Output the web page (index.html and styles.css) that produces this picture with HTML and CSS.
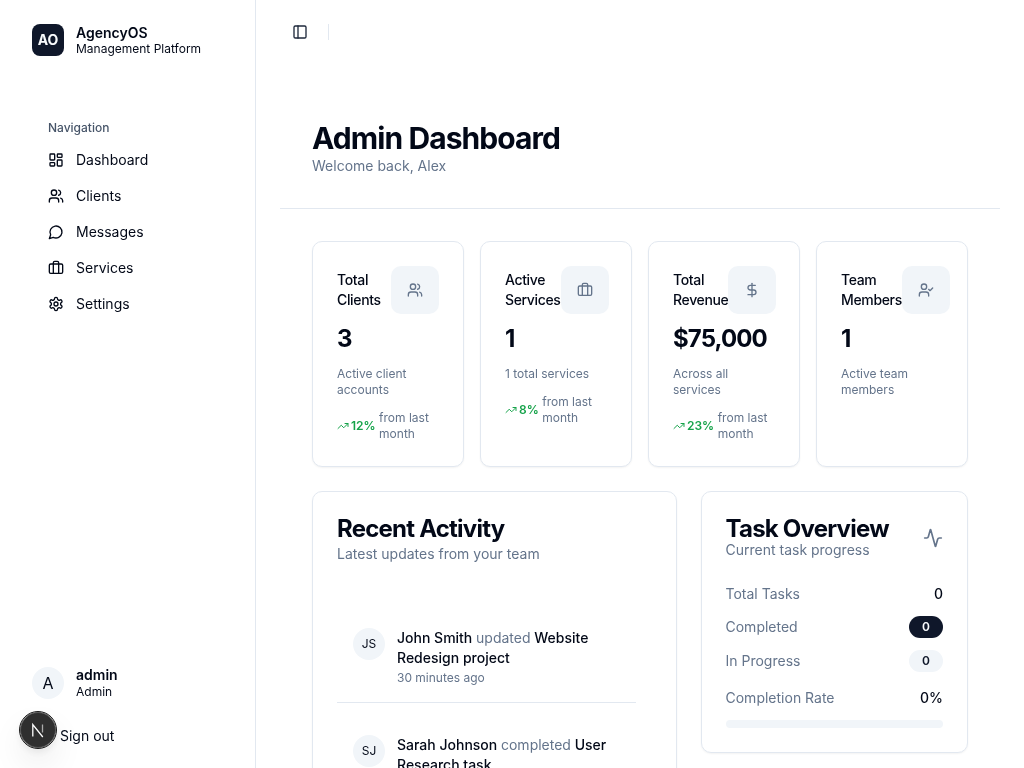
FILE: index.html
```html
<!DOCTYPE html>
<html lang="en">
<head>
<meta charset="utf-8">
<title>Admin Dashboard</title>
<link rel="stylesheet" href="styles.css">
</head>
<body>
<svg class="defs" aria-hidden="true">
  <symbol id="i-dash" viewBox="0 0 24 24"><rect x="3" y="3" width="7" height="9" rx="1"/><rect x="14" y="3" width="7" height="5" rx="1"/><rect x="14" y="12" width="7" height="9" rx="1"/><rect x="3" y="16" width="7" height="5" rx="1"/></symbol>
  <symbol id="i-users" viewBox="0 0 24 24"><path d="M16 21v-2a4 4 0 0 0-4-4H6a4 4 0 0 0-4 4v2"/><circle cx="9" cy="7" r="4"/><path d="M22 21v-2a4 4 0 0 0-3-3.87"/><path d="M16 3.13a4 4 0 0 1 0 7.75"/></symbol>
  <symbol id="i-msg" viewBox="0 0 24 24"><path d="M7.9 20A9 9 0 1 0 4 16.1L2 22Z"/></symbol>
  <symbol id="i-case" viewBox="0 0 24 24"><path d="M16 20V4a2 2 0 0 0-2-2h-4a2 2 0 0 0-2 2v16"/><rect x="2" y="6" width="20" height="14" rx="2"/></symbol>
  <symbol id="i-gear" viewBox="0 0 24 24"><path d="M12.22 2h-.44a2 2 0 0 0-2 2v.18a2 2 0 0 1-1 1.73l-.43.25a2 2 0 0 1-2 0l-.15-.08a2 2 0 0 0-2.73.73l-.22.38a2 2 0 0 0 .73 2.73l.15.1a2 2 0 0 1 1 1.72v.51a2 2 0 0 1-1 1.74l-.15.09a2 2 0 0 0-.73 2.73l.22.38a2 2 0 0 0 2.73.73l.15-.08a2 2 0 0 1 2 0l.43.25a2 2 0 0 1 1 1.73V20a2 2 0 0 0 2 2h.44a2 2 0 0 0 2-2v-.18a2 2 0 0 1 1-1.73l.43-.25a2 2 0 0 1 2 0l.15.08a2 2 0 0 0 2.73-.73l.22-.39a2 2 0 0 0-.73-2.73l-.15-.08a2 2 0 0 1-1-1.74v-.5a2 2 0 0 1 1-1.74l.15-.09a2 2 0 0 0 .73-2.73l-.22-.38a2 2 0 0 0-2.73-.73l-.15.08a2 2 0 0 1-2 0l-.43-.25a2 2 0 0 1-1-1.73V4a2 2 0 0 0-2-2z"/><circle cx="12" cy="12" r="3"/></symbol>
  <symbol id="i-dollar" viewBox="0 0 24 24"><line x1="12" y1="2" x2="12" y2="22"/><path d="M17 5H9.5a3.5 3.5 0 0 0 0 7h5a3.5 3.5 0 0 1 0 7H6"/></symbol>
  <symbol id="i-ucheck" viewBox="0 0 24 24"><path d="M16 21v-2a4 4 0 0 0-4-4H6a4 4 0 0 0-4 4v2"/><circle cx="9" cy="7" r="4"/><polyline points="16 11 18 13 22 9"/></symbol>
  <symbol id="i-activity" viewBox="0 0 24 24"><path d="M22 12h-2.48a2 2 0 0 0-1.93 1.46l-2.35 8.36a.25.25 0 0 1-.48 0L9.24 2.18a.25.25 0 0 0-.48 0l-2.35 8.36A2 2 0 0 1 4.49 12H2"/></symbol>
  <symbol id="i-trend" viewBox="0 0 24 24"><polyline points="22 7 13.5 15.5 8.5 10.5 2 17"/><polyline points="16 7 22 7 22 13"/></symbol>
  <symbol id="i-panel" viewBox="0 0 24 24"><rect x="3" y="3" width="18" height="18" rx="2"/><path d="M9 3v18"/></symbol>
  <symbol id="i-logout" viewBox="0 0 24 24"><path d="M9 21H5a2 2 0 0 1-2-2V5a2 2 0 0 1 2-2h4"/><polyline points="16 17 21 12 16 7"/><line x1="21" y1="12" x2="9" y2="12"/></symbol>
</svg>

<div class="app">
  <aside class="sidebar">
    <div class="brand">
      <div class="brand-mark">AO</div>
      <div class="brand-text">
        <div class="brand-name">AgencyOS</div>
        <div class="brand-sub">Management Platform</div>
      </div>
    </div>
    <nav class="nav">
      <div class="nav-label">Navigation</div>
      <a class="nav-item"><svg class="ico"><use href="#i-dash"/></svg>Dashboard</a>
      <a class="nav-item"><svg class="ico"><use href="#i-users"/></svg>Clients</a>
      <a class="nav-item"><svg class="ico"><use href="#i-msg"/></svg>Messages</a>
      <a class="nav-item"><svg class="ico"><use href="#i-case"/></svg>Services</a>
      <a class="nav-item"><svg class="ico"><use href="#i-gear"/></svg>Settings</a>
    </nav>
    <div class="side-foot">
      <div class="user">
        <div class="user-avatar">A</div>
        <div class="user-text">
          <div class="user-name">admin</div>
          <div class="user-role">Admin</div>
        </div>
      </div>
      <a class="signout"><svg class="ico"><use href="#i-logout"/></svg>Sign out</a>
    </div>
  </aside>

  <main class="main">
    <header class="topbar">
      <svg class="ico"><use href="#i-panel"/></svg>
      <span class="topbar-sep"></span>
    </header>
    <div class="content">
      <section class="page-head">
        <h1 class="page-title">Admin Dashboard</h1>
        <p class="page-sub">Welcome back, Alex</p>
      </section>
      <div class="body">
        <section class="stats">
          <article class="stat card">
            <div class="stat-top"><div class="stat-name">Total Clients</div><div class="stat-icon"><svg class="ico"><use href="#i-users"/></svg></div></div>
            <div class="stat-value">3</div>
            <div class="stat-desc">Active client accounts</div>
            <div class="trend"><svg class="trend-ico"><use href="#i-trend"/></svg><span class="trend-pct">12%</span><span class="trend-text">from last month</span></div>
          </article>
          <article class="stat card">
            <div class="stat-top"><div class="stat-name">Active Services</div><div class="stat-icon"><svg class="ico"><use href="#i-case"/></svg></div></div>
            <div class="stat-value">1</div>
            <div class="stat-desc">1 total services</div>
            <div class="trend"><svg class="trend-ico"><use href="#i-trend"/></svg><span class="trend-pct">8%</span><span class="trend-text">from last month</span></div>
          </article>
          <article class="stat card">
            <div class="stat-top"><div class="stat-name">Total Revenue</div><div class="stat-icon"><svg class="ico"><use href="#i-dollar"/></svg></div></div>
            <div class="stat-value">$75,000</div>
            <div class="stat-desc">Across all services</div>
            <div class="trend"><svg class="trend-ico"><use href="#i-trend"/></svg><span class="trend-pct">23%</span><span class="trend-text">from last month</span></div>
          </article>
          <article class="stat card">
            <div class="stat-top"><div class="stat-name">Team Members</div><div class="stat-icon"><svg class="ico"><use href="#i-ucheck"/></svg></div></div>
            <div class="stat-value">1</div>
            <div class="stat-desc">Active team members</div>
          </article>
        </section>

        <section class="panels">
          <article class="panel card">
            <h2 class="panel-title">Recent Activity</h2>
            <p class="panel-sub panel-sub-gap">Latest updates from your team</p>
            <div class="feed">
              <div class="feed-item">
                <div class="feed-avatar">JS</div>
                <div class="feed-body">
                  <div class="feed-line"><span>John Smith</span> <span class="feed-verb">updated</span> <span>Website Redesign project</span></div>
                  <div class="feed-time">30 minutes ago</div>
                </div>
              </div>
              <div class="feed-item">
                <div class="feed-avatar">SJ</div>
                <div class="feed-body">
                  <div class="feed-line"><span>Sarah Johnson</span> <span class="feed-verb">completed</span> <span>User Research task</span></div>
                  <div class="feed-time">2 hours ago</div>
                </div>
              </div>
            </div>
          </article>
          <article class="panel card">
            <div class="task-head">
              <div>
                <h2 class="panel-title">Task Overview</h2>
                <p class="panel-sub">Current task progress</p>
              </div>
              <svg class="ico-lg"><use href="#i-activity"/></svg>
            </div>
            <div class="task-rows">
              <div class="task-row"><span class="task-label">Total Tasks</span><span class="task-num">0</span></div>
              <div class="task-row"><span class="task-label">Completed</span><span class="badge badge-dark">0</span></div>
              <div class="task-row"><span class="task-label">In Progress</span><span class="badge badge-light">0</span></div>
            </div>
            <div class="task-rate">
              <div class="task-row"><span class="task-label">Completion Rate</span><span class="task-num">0%</span></div>
              <div class="progress"></div>
            </div>
          </article>
        </section>
      </div>
    </div>
  </main>
</div>

<button class="next-badge" aria-label="Next.js dev tools">
  <svg width="16" height="16" viewBox="0 0 16 16" fill="none"><path d="M2.8 14.5V2.5l10 12.5" stroke="#fff" stroke-width="1.3"/><path d="M12.5 2.5v8" stroke="#fff" stroke-opacity=".6" stroke-width="1.3"/></svg>
</button>
</body>
</html>
```

FILE: styles.css
```css
* { box-sizing: border-box; }
html, body { margin: 0; height: 100%; overflow: hidden; }
body {
  font-family: Inter, "Liberation Sans", sans-serif;
  font-size: 14px;
  line-height: 20px;
  color: #020817;
  background: #fff;
  -webkit-font-smoothing: antialiased;
}
h1, h2, p { margin: 0; }
.defs { position: absolute; width: 0; height: 0; }
.ico, .ico-lg, .trend-ico {
  fill: none;
  stroke: currentColor;
  stroke-width: 2;
  stroke-linecap: round;
  stroke-linejoin: round;
  flex-shrink: 0;
}
.ico { width: 16px; height: 16px; }
.ico-lg { width: 20px; height: 20px; color: #64748b; }
.trend-ico { width: 12px; height: 12px; color: #16a34a; }

.app { display: flex; height: 768px; will-change: opacity; }

.sidebar {
  width: 256px;
  flex-shrink: 0;
  display: flex;
  flex-direction: column;
  border-right: 1px solid #e2e8f0;
  padding: 24px 0 12px 32px;
}
.brand { display: flex; align-items: flex-start; gap: 12px; }
.brand-mark {
  width: 32px; height: 32px;
  border-radius: 8px;
  background: #0f172a;
  color: #f8fafc;
  font-weight: 700;
  font-size: 14px;
  display: flex; align-items: center; justify-content: center;
}
.brand-name { font-weight: 600; font-size: 14px; line-height: 17px; }
.brand-sub { font-size: 12px; line-height: 16px; }
.nav { margin-top: 63px; padding-left: 16px; }
.nav-label { font-size: 12px; line-height: 16px; font-weight: 500; color: #475569; margin-bottom: 6px; }
.nav-item {
  display: flex; align-items: center; gap: 12px;
  height: 36px;
  font-size: 14px;
}
.side-foot { margin-top: auto; }
.user { display: flex; align-items: flex-start; gap: 12px; }
.user-avatar {
  width: 32px; height: 32px;
  border-radius: 50%;
  background: #f1f5f9;
  display: flex; align-items: center; justify-content: center;
  font-size: 16px;
}
.user-text { margin-top: -1px; }
.user-name { font-weight: 600; font-size: 14px; line-height: 17px; }
.user-role { font-size: 12px; line-height: 16px; margin-top: 1px; }
.signout {
  display: flex; align-items: center; gap: 12px;
  height: 40px;
  margin-top: 16px;
}

.main { flex: 1; min-width: 0; height: 768px; overflow: hidden; }
.topbar { height: 64px; display: flex; align-items: center; gap: 20px; padding-left: 36px; color: #1e293b; }
.topbar-sep { width: 1px; height: 16px; background: #e2e8f0; }
.content { padding: 56px 24px 0; }
.page-head { padding: 0 32px 32px; border-bottom: 1px solid #e2e8f0; }
.page-title { font-size: 30px; line-height: 36px; font-weight: 700; letter-spacing: -0.92px; }
.page-sub { color: #64748b; font-size: 14px; line-height: 20px; }
.body { padding: 32px 32px 0; }

.card {
  background: #fff;
  border: 1px solid #e2e8f0;
  border-radius: 10px;
  box-shadow: 0 1px 2px rgba(0,0,0,.05);
  padding: 24px;
}
.stats { display: grid; grid-template-columns: repeat(4, 1fr); gap: 16px; }
.stat { min-width: 0; }
.stat-top { display: flex; justify-content: space-between; }
.stat-name { font-size: 14px; line-height: 20px; font-weight: 500; padding-top: 4px; min-width: min-content; letter-spacing: -0.35px; }
.stat-icon {
  width: 48px; height: 48px;
  flex-shrink: 0;
  border-radius: 10px;
  background: #f1f5f9;
  color: #64748b;
  display: flex; align-items: center; justify-content: center;
}
.stat-value { font-size: 24px; line-height: 32px; font-weight: 700; margin-top: 9px; letter-spacing: -0.9px; }
.stat-desc { font-size: 12px; line-height: 16px; color: #64748b; margin-top: 11px; }
.trend { display: flex; align-items: center; margin-top: 12px; }
.trend-pct { font-size: 12px; line-height: 16px; font-weight: 600; color: #16a34a; margin: 0 3.5px 0 2px; flex-shrink: 0; }
.trend-text { font-size: 12px; line-height: 16px; color: #64748b; }

.panels { display: grid; grid-template-columns: 364.5px 267.5px; gap: 24px; align-items: start; margin-top: 24px; }
.panel-title { font-size: 24px; line-height: 26px; margin-bottom: -2px; font-weight: 700; letter-spacing: -0.78px; }
.panel-sub { font-size: 14px; line-height: 20px; color: #64748b; }
.panel-sub-gap { margin-top: 4px; }
.feed { margin-top: 48px; padding-right: 16px; display: flex; flex-direction: column; gap: 16px; }
.feed-item { display: flex; gap: 12px; padding: 16px; border-bottom: 1px solid #e2e8f0; }
.feed-avatar {
  width: 32px; height: 32px;
  flex-shrink: 0;
  border-radius: 50%;
  background: #f1f5f9;
  display: flex; align-items: center; justify-content: center;
  font-size: 12px;
}
.feed-line { font-weight: 500; }
.feed-verb { color: #64748b; font-weight: 400; }
.feed-time { font-size: 12px; line-height: 16px; color: #64748b; margin-top: 2px; }

.task-head { display: flex; align-items: center; justify-content: space-between; }
.task-rows { margin-top: 24px; display: flex; flex-direction: column; gap: 12px; }
.task-row { display: flex; align-items: center; justify-content: space-between; }
.task-label { color: #64748b; }
.task-num { font-weight: 500; }
.badge {
  border: 1px solid transparent;
  border-radius: 999px;
  padding: 2px 12px;
  font-size: 12px;
  line-height: 16px;
  font-weight: 600;
}
.badge-dark { background: #0f172a; color: #f8fafc; }
.badge-light { background: #f1f5f9; color: #0f172a; }
.task-rate { margin-top: 16px; }
.progress { height: 8px; border-radius: 999px; background: #f1f5f9; margin-top: 12px; }

.next-badge {
  position: fixed;
  left: 20px; top: 712px;
  width: 36px; height: 36px;
  padding: 0;
  border-radius: 50%;
  background: #2f2f2f;
  border: 1px solid #5a5a5a;
  outline: 1px solid #1a1a1a;
  box-shadow: 0 16px 32px rgba(0,0,0,.08), 0 4px 8px rgba(0,0,0,.08);
  display: flex; align-items: center; justify-content: center;
}
```
